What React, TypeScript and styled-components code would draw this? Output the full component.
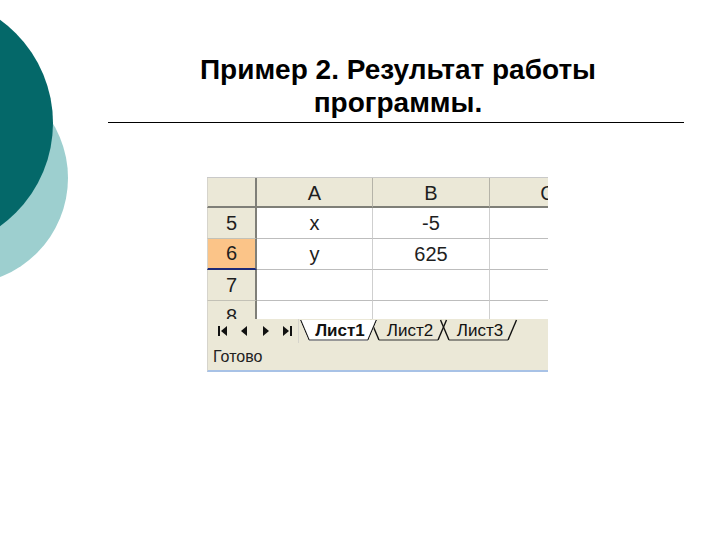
import React from "react";
import styled, { createGlobalStyle } from "styled-components";

const Global = createGlobalStyle`
  html, body { margin: 0; padding: 0; background: #fff; }
  body { font-family: "Liberation Sans", Arial, sans-serif; }
`;

const Page = styled.div`
  position: relative;
  width: 720px;
  height: 540px;
  overflow: hidden;
  background: #fff;
`;

const Circle = styled.div<{ $x: number; $y: number; $r: number; $c: string }>`
  position: absolute;
  left: ${(p) => p.$x - p.$r}px;
  top: ${(p) => p.$y - p.$r}px;
  width: ${(p) => p.$r * 2}px;
  height: ${(p) => p.$r * 2}px;
  border-radius: 50%;
  background: ${(p) => p.$c};
`;

const Content = styled.div`
  position: relative;
  display: flex;
  flex-direction: column;
`;

const TitleBlock = styled.div`
  margin-left: 108px;
  width: 576px;
  padding-top: 53px;
  padding-bottom: 3px;
  border-bottom: 1.5px solid #000;
`;

const Title = styled.h1`
  margin: 0;
  font-family: "Liberation Sans", Arial, sans-serif;
  font-weight: 700;
  font-size: 28px;
  line-height: 33px;
  text-align: center;
  color: #000;
  padding-left: 4px;
`;

const Sheet = styled.div`
  margin-left: 207px;
  margin-top: 54px;
  width: 341px;
  display: flex;
  flex-direction: column;
  overflow: hidden;
`;

const Grid = styled.div`
  height: 142px;
  overflow: hidden;
  border-top: 1px solid #c9c9c9;
  box-sizing: border-box;
  display: flex;
  flex-direction: column;
`;

const Row = styled.div<{ $h: number }>`
  display: grid;
  grid-template-columns: 50px 116px 117px 116px;
  height: ${(p) => p.$h}px;
  flex: none;
`;

const cellFont = `
  font-family: "Liberation Sans", Arial, sans-serif;
  font-size: 20px;
  color: #1e1e1e;
  display: flex;
  align-items: center;
  justify-content: center;
  box-sizing: border-box;
`;

const ColHead = styled.div<{ $corner?: boolean }>`
  ${cellFont}
  background: #ebe8d7;
  border-bottom: 2px solid #7f7f78;
  border-right: ${(p) => (p.$corner ? "2px solid #7f7f78" : "1px solid #b5b3a8")};
  border-left: ${(p) => (p.$corner ? "1px solid #d6d4cc" : "0")};
  padding-top: 2px;
  white-space: nowrap;
`;

const RowHead = styled.div<{ $sel?: boolean }>`
  ${cellFont}
  background: ${(p) => (p.$sel ? "#fbc488" : "#ebe8d7")};
  border-right: 2px solid #7f7f78;
  border-left: 1px solid #d6d4cc;
  border-bottom: ${(p) => (p.$sel ? "2px solid #1c2a78" : "1px solid #c3c1b6")};
`;

const Cell = styled.div`
  ${cellFont}
  background: #fff;
  border-right: 1px solid #cfcfcf;
  border-bottom: 1.5px solid #bdbdbd;
`;

const TabBar = styled.div`
  height: 24px;
  background: #ebe8d7;
  display: flex;
  align-items: stretch;
  box-sizing: border-box;
`;

const Nav = styled.div`
  width: 92px;
  display: flex;
  align-items: center;
  padding-left: 4px;
  box-sizing: border-box;
  border-right: 1px solid #d6d4cc;
  border-left: 1px solid #d6d4cc;
  flex: none;
`;

const NavBtn = styled.div`
  width: 23px;
  height: 20px;
  display: flex;
  align-items: center;
  justify-content: center;
`;

const Tabs = styled.div`
  display: flex;
  align-items: flex-start;
  padding-top: 1px;
  margin-left: 1px;
`;

const Tab = styled.div<{ $active?: boolean }>`
  position: relative;
  height: 21px;
  width: 77px;
  margin-right: -7px;
  padding-left: 3px;
  display: flex;
  align-items: center;
  justify-content: center;
  box-sizing: border-box;
  font-family: "Liberation Sans", Arial, sans-serif;
  font-size: 17px;
  font-weight: ${(p) => (p.$active ? 700 : 400)};
  color: #111;
  z-index: ${(p) => (p.$active ? 2 : 1)};
  background: ${(p) => (p.$active ? "#fff" : "transparent")};
  clip-path: ${(p) => (p.$active ? "polygon(0 0, 100% 0, calc(100% - 9px) 100%, 9px 100%)" : "none")};
  overflow: visible;
`;

const TabEdges = styled.svg`
  position: absolute;
  left: 0;
  top: 0;
  width: 100%;
  height: 100%;
  overflow: visible;
  pointer-events: none;
`;

const TabLabel = styled.span`
  position: relative;
  padding-top: 1px;
`;

const Status = styled.div`
  height: 27px;
  background: #ebe8d7;
  border-bottom: 2px solid #a8c2e6;
  display: flex;
  align-items: center;
  padding-left: 5px;
  font-family: "Liberation Sans", Arial, sans-serif;
  font-size: 16px;
  color: #222;
  border-left: 1px solid #d6d4cc;
`;

const Tri = ({ dir, bar }: { dir: "l" | "r"; bar?: boolean }) => (
  <svg width="11" height="12" viewBox="0 0 11 12">
    {dir === "l" ? (
      <>
        {bar && <rect x="1" y="1" width="2" height="10" fill="#111" />}
        <polygon points={bar ? "10,1 10,11 4,6" : "8,1 8,11 2,6"} fill="#111" />
      </>
    ) : (
      <>
        {bar && <rect x="8" y="1" width="2" height="10" fill="#111" />}
        <polygon points={bar ? "1,1 1,11 7,6" : "3,1 3,11 9,6"} fill="#111" />
      </>
    )}
  </svg>
);

const SheetTab = ({ label, active }: { label: string; active?: boolean }) => (
  <Tab $active={active}>
    <TabLabel>{label}</TabLabel>
    <TabEdges viewBox="0 0 77 21" preserveAspectRatio="none">
      <line x1="0.5" y1="0" x2="9" y2="20" stroke="#111" strokeWidth="1.4" />
      <line x1="68" y1="20" x2="76.5" y2="0" stroke="#111" strokeWidth="1.4" />
      <line x1="9" y1="20" x2="68" y2="20" stroke="#333" strokeWidth="1" />
    </TabEdges>
  </Tab>
);

const rows: { n: string; a: string; b: string; sel?: boolean }[] = [
  { n: "5", a: "x", b: "-5" },
  { n: "6", a: "y", b: "625", sel: true },
  { n: "7", a: "", b: "" },
  { n: "8", a: "", b: "" },
];

export default function App() {
  return (
    <>
      <Global />
      <Page>
        <Circle $x={-38} $y={178} $r={106} $c="#9dcfcf" />
        <Circle $x={-74} $y={123} $r={127} $c="#046869" />
        <Content>
          <TitleBlock>
            <Title>
              Пример 2. Результат работы
              <br />
              программы.
            </Title>
          </TitleBlock>
          <Sheet>
            <Grid>
              <Row $h={30}>
                <ColHead $corner />
                <ColHead>A</ColHead>
                <ColHead>B</ColHead>
                <ColHead>C</ColHead>
              </Row>
              {rows.map((r) => (
                <Row $h={31} key={r.n}>
                  <RowHead $sel={r.sel}>{r.n}</RowHead>
                  <Cell>{r.a}</Cell>
                  <Cell>{r.b}</Cell>
                  <Cell />
                </Row>
              ))}
            </Grid>
            <TabBar>
              <Nav>
                <NavBtn><Tri dir="l" bar /></NavBtn>
                <NavBtn><Tri dir="l" /></NavBtn>
                <NavBtn><Tri dir="r" /></NavBtn>
                <NavBtn><Tri dir="r" bar /></NavBtn>
              </Nav>
              <Tabs>
                <SheetTab label="Лист1" active />
                <SheetTab label="Лист2" />
                <SheetTab label="Лист3" />
              </Tabs>
            </TabBar>
            <Status>Готово</Status>
          </Sheet>
        </Content>
      </Page>
    </>
  );
}
